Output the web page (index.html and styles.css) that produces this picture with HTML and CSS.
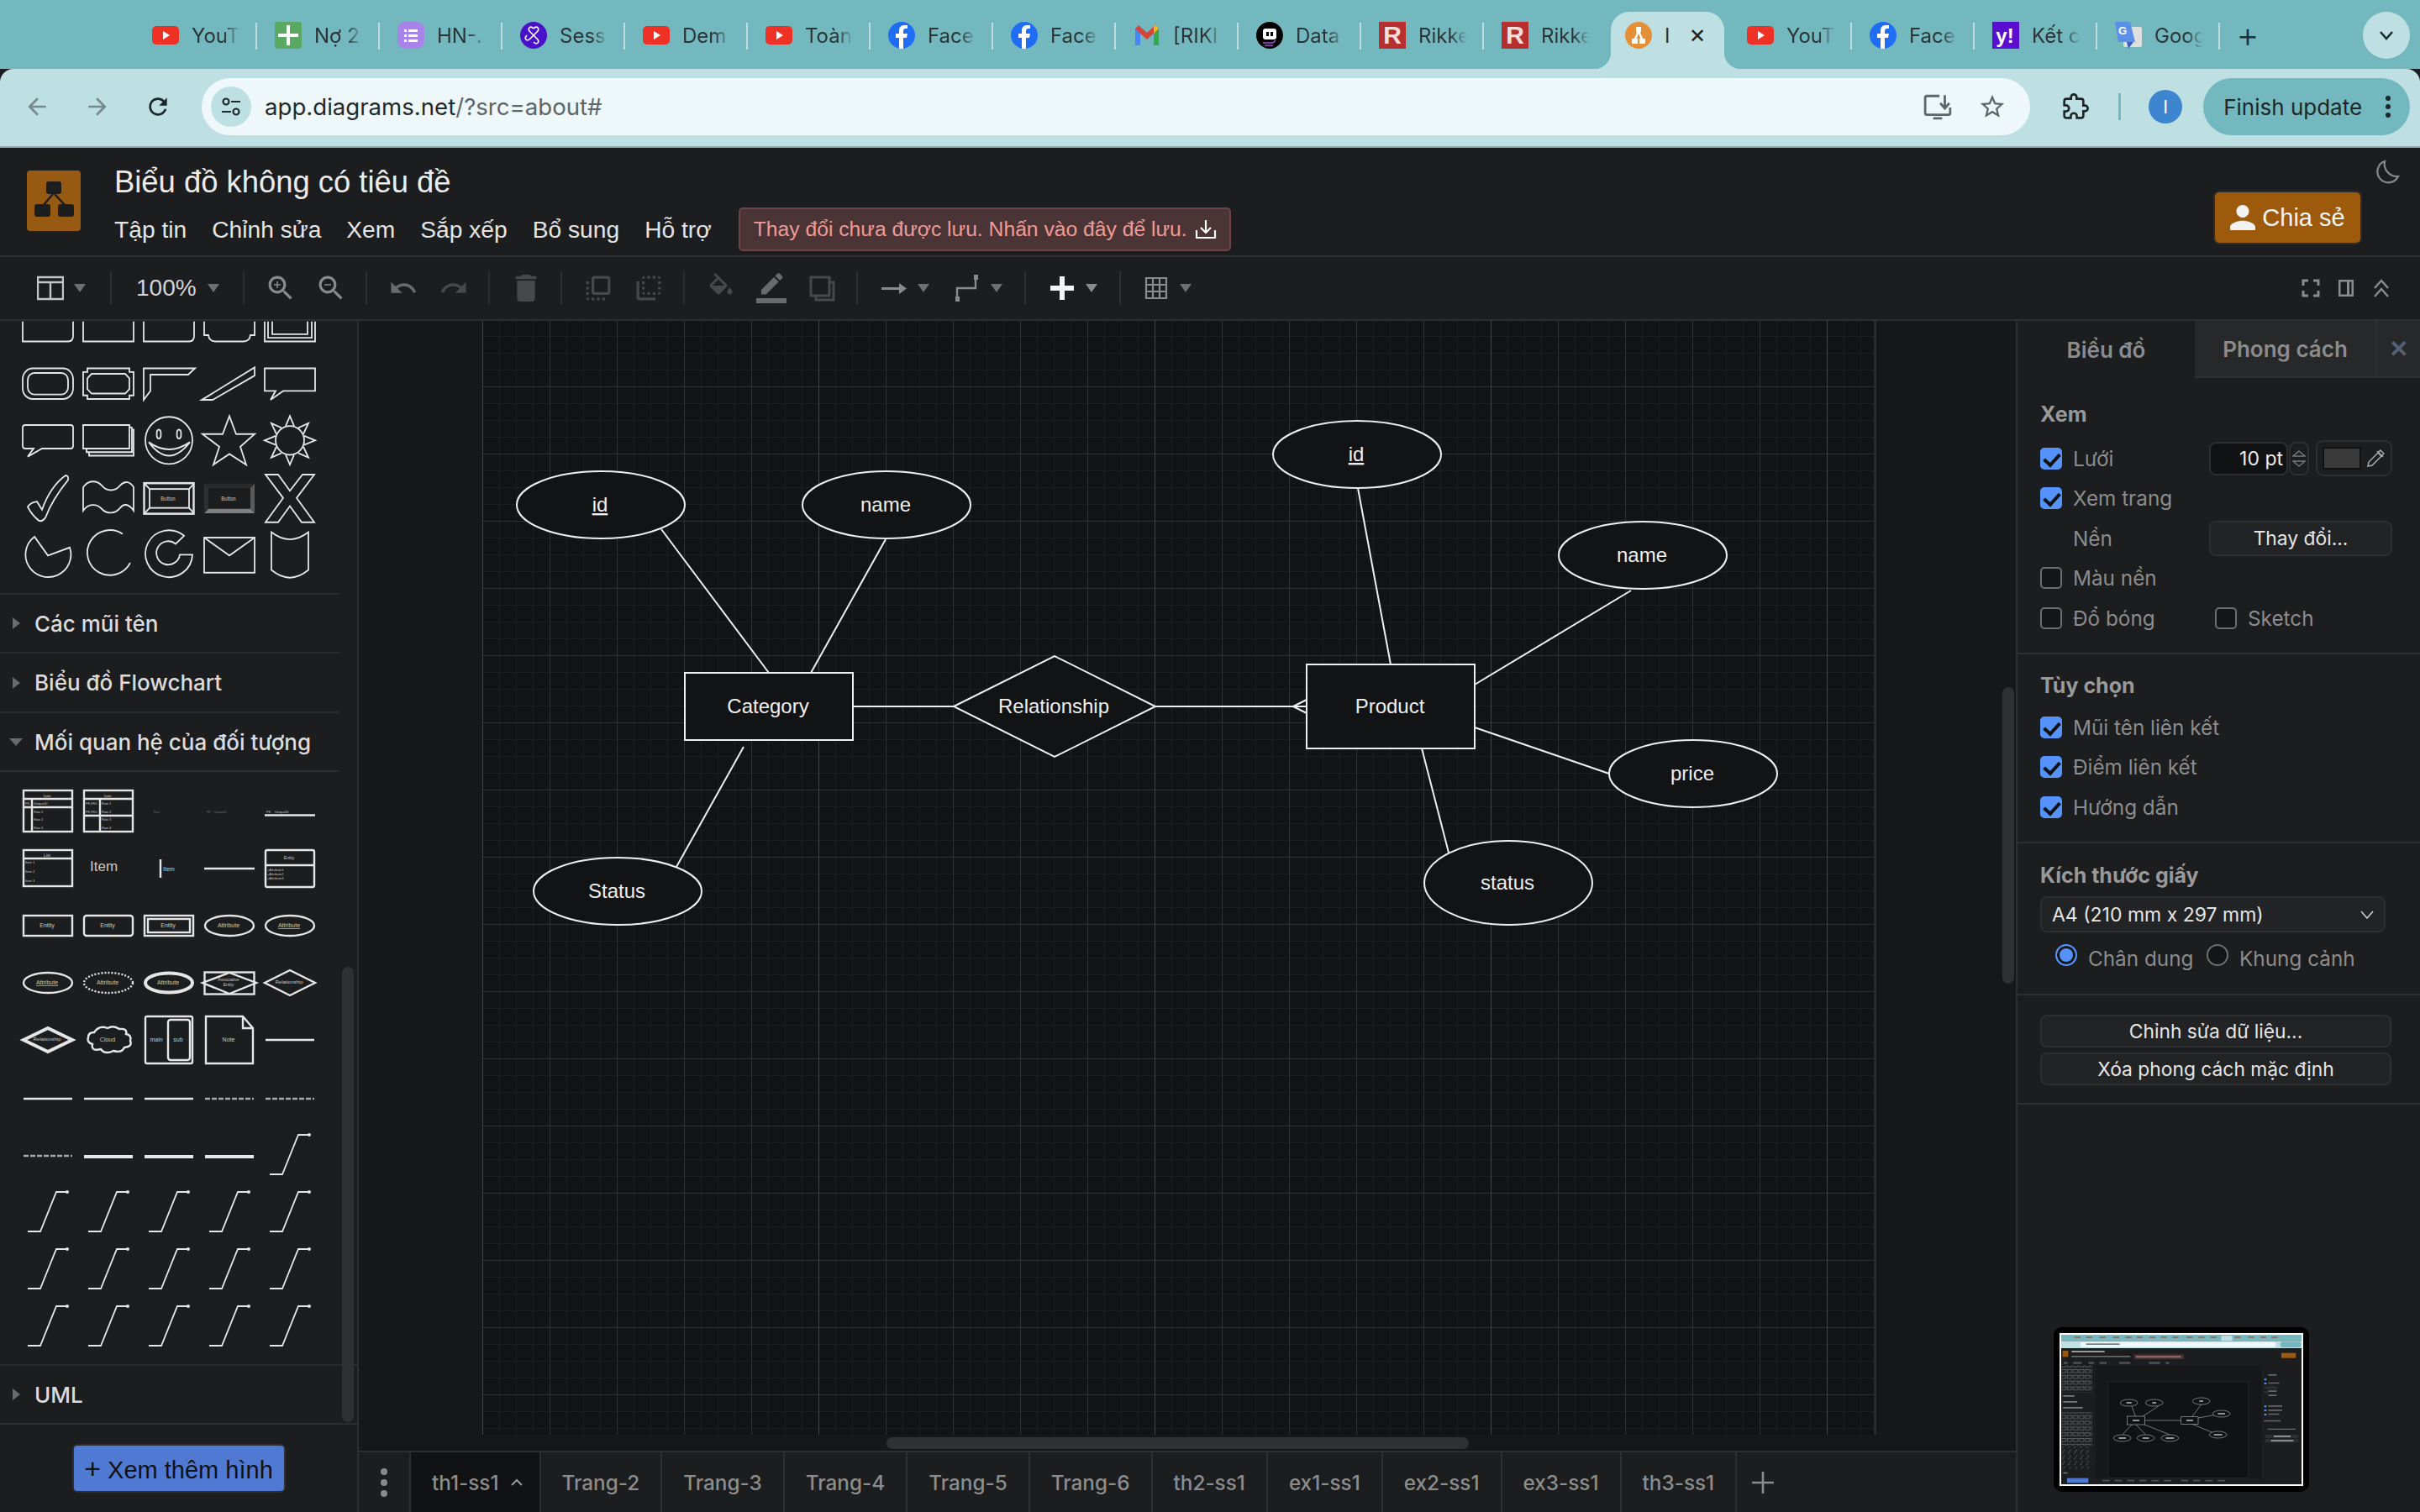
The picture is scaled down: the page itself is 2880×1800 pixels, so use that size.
FILE: index.html
```html
<!DOCTYPE html>
<html lang="vi">
<head>
  <meta charset="UTF-8" />
  <title>Biểu đồ không có tiêu đề - draw.io</title>
  <link rel="stylesheet" href="styles.css">
</head>
<body>
  <!-- shared favicons -->
  <svg class="defs" width="0" height="0">
    <symbol id="fav-yt" viewBox="0 0 32 32"><rect y="5" width="32" height="22" rx="5" fill="#ee3124"/><path d="M13 11l8 5-8 5z" fill="#fff"/></symbol>
    <symbol id="fav-fb" viewBox="0 0 32 32"><circle cx="16" cy="16" r="16" fill="#1f6cf5"/><path d="M18 32V19h4l1-5h-5v-3c0-2 1-3 3-3h2V4h-4c-4 0-6 3-6 6v4H9v5h4v13z" fill="#fff"/></symbol>
    <symbol id="i-caret" viewBox="0 0 16 12"><path d="M1 1h14L8 11z" fill="currentColor"/></symbol>
  </svg>

  <div class="tabstrip">
    <div class="tab"><svg class="fav"><use href="#fav-yt"/></svg><span class="tab-title">YouT</span></div>
    <div class="tab"><svg class="fav" viewBox="0 0 32 32"><rect width="32" height="32" rx="3" fill="#5aa862"/><path d="M14 4h4v10h10v4H18v10h-4V18H4v-4h10z" fill="#fff"/></svg><span class="tab-title">Nợ 2</span></div>
    <div class="tab"><svg class="fav" viewBox="0 0 32 32"><rect width="32" height="32" rx="9" fill="#a884ea"/><path d="M8 9h3v3H8zm5 0h11v3H13zM8 15h3v3H8zm5 0h11v3H13zM8 21h3v3H8zm5 0h11v3H13z" fill="#fff"/></svg><span class="tab-title">HN-.</span></div>
    <div class="tab"><svg class="fav" viewBox="0 0 32 32"><circle cx="16" cy="16" r="16" fill="#4a12c8"/><path d="M16 8c4-4 8 0 4 4l-4 4-4 4c-4 4-8 0-4-4m8 0l4 4c4 4 0 8-4 4M16 16l-4-4c-4-4 0-8 4-4" fill="none" stroke="#fff" stroke-width="1.6"/></svg><span class="tab-title">Sess</span></div>
    <div class="tab"><svg class="fav"><use href="#fav-yt"/></svg><span class="tab-title">Dem</span></div>
    <div class="tab"><svg class="fav"><use href="#fav-yt"/></svg><span class="tab-title">Toàn</span></div>
    <div class="tab"><svg class="fav"><use href="#fav-fb"/></svg><span class="tab-title">Face</span></div>
    <div class="tab"><svg class="fav"><use href="#fav-fb"/></svg><span class="tab-title">Face</span></div>
    <div class="tab"><svg class="fav" viewBox="0 0 32 32"><path d="M2 8v20h6V14l8 7 8-7v14h6V8l-4-4-10 9L6 4z" fill="#d5453a"/><path d="M2 8v20h6V14z" fill="#4486f3"/><path d="M24 14v14h6V8z" fill="#38a852"/><path d="M24 14l6-6-4-4-2 2z" fill="#f5bb17"/></svg><span class="tab-title">[RIKI</span></div>
    <div class="tab"><svg class="fav" viewBox="0 0 32 32"><circle cx="16" cy="16" r="16" fill="#000"/><rect x="8" y="8" width="16" height="13" rx="3" fill="#fff"/><path d="M12 12h3v5h-3zm5 0h3v5h-3z" fill="#000"/><path d="M8 25h12l3-3M10 28h10" stroke="#a24ed6" stroke-width="1.6" fill="none"/></svg><span class="tab-title">Data</span></div>
    <div class="tab"><svg class="fav" viewBox="0 0 32 32"><rect width="32" height="32" fill="#b5302f"/><text x="16" y="26" text-anchor="middle" class="fav-letter">R</text></svg><span class="tab-title">Rikke</span></div>
    <div class="tab tab-before-active"><svg class="fav" viewBox="0 0 32 32"><rect width="32" height="32" fill="#b5302f"/><text x="16" y="26" text-anchor="middle" class="fav-letter">R</text></svg><span class="tab-title">Rikke</span></div>
    <div class="tab tab-active">
      <svg class="fav" viewBox="0 0 32 32"><circle cx="16" cy="16" r="16" fill="#e58f37"/><path d="M13 6h6v6h-1.2l3.400 8H24v6h-7v-6h1.400L16 14l-2.400 6H15v6H8v-6h2.800l3.400-8H13z" fill="#fff"/></svg>
      <span class="tab-title tab-title-short">I</span>
      <span class="tab-close">✕</span>
    </div>
    <div class="tab"><svg class="fav"><use href="#fav-yt"/></svg><span class="tab-title">YouT</span></div>
    <div class="tab"><svg class="fav"><use href="#fav-fb"/></svg><span class="tab-title">Face</span></div>
    <div class="tab"><svg class="fav" viewBox="0 0 32 32"><rect width="32" height="32" fill="#5a0fd0"/><text x="15" y="25" text-anchor="middle" class="fav-y">y!</text></svg><span class="tab-title">Kết c</span></div>
    <div class="tab"><svg class="fav" viewBox="0 0 32 32"><rect x="10" y="6" width="22" height="24" rx="2" fill="#dedede"/><path d="M0 0h18l6 24H4z" fill="#5c8fe8"/><path d="M14 24l8 0-6 8z" fill="#3a62bd"/><text x="9" y="15" text-anchor="middle" class="fav-g">G</text></svg><span class="tab-title">Goog</span></div>
    <span class="tab-plus">+</span>
    <span class="tab-more"><svg width="18" height="12" viewBox="0 0 18 12"><path d="M2 2l7 8 7-8" fill="none" stroke="#1d2a2c" stroke-width="2.600"/></svg></span>
  </div>

  <div class="navbar">
    <svg class="nav-ico nav-back" viewBox="0 0 24 24"><path d="M20 11H7.830l5.590-5.590L12 4l-8 8 8 8 1.410-1.410L7.830 13H20v-2z"/></svg>
    <svg class="nav-ico nav-forward" viewBox="0 0 24 24"><path d="M12 4l-1.410 1.410L16.170 11H4v2h12.170l-5.580 5.590L12 20l8-8z"/></svg>
    <svg class="nav-ico nav-reload" viewBox="0 0 24 24"><path d="M17.650 6.350C16.200 4.900 14.210 4 12 4c-4.420 0-7.990 3.580-7.990 8s3.570 8 7.990 8c3.730 0 6.840-2.550 7.730-6h-2.080c-.82 2.330-3.040 4-5.650 4-3.310 0-6-2.690-6-6s2.690-6 6-6c1.660 0 3.140.69 4.220 1.780L13 11h7V4l-2.350 2.350z"/></svg>
    <div class="omnibox">
      <span class="site-info"><svg width="26" height="26" viewBox="0 0 26 26"><circle cx="7" cy="7" r="3.500" fill="none" stroke="#1f2a2c" stroke-width="2.200"/><path d="M13 7h11M2 19h11" stroke="#1f2a2c" stroke-width="2.200"/><circle cx="19" cy="19" r="3.500" fill="none" stroke="#1f2a2c" stroke-width="2.200"/></svg></span>
      <span class="url">app.diagrams.net<span class="url-rest">/?src=about#</span></span>
      <svg class="omni-ico omni-install" viewBox="0 0 32 32"><path d="M18 4H4a2 2 0 0 0-2 2v17a2 2 0 0 0 2 2h24a2 2 0 0 0 2-2v-6M11 29h10M24 3v14M19 12l5 6 5-6" fill="none" stroke="#5c6668" stroke-width="2.600"/></svg>
      <svg class="omni-ico omni-star" viewBox="0 0 24 24"><path d="M22 9.240l-7.190-.62L12 2 9.190 8.630 2 9.240l5.460 4.730L5.820 21 12 17.270 18.180 21l-1.630-7.030L22 9.240zM12 15.400l-3.760 2.270 1-4.280-3.320-2.880 4.380-.38L12 6.100l1.710 4.040 4.380.38-3.320 2.880 1 4.280L12 15.400z"/></svg>
    </div>
    <svg class="nav-ico nav-ext" viewBox="0 0 24 24"><path d="M20.500 11H19V7c0-1.100-.9-2-2-2h-4V3.500C13 2.120 11.880 1 10.500 1S8 2.120 8 3.500V5H4c-1.100 0-1.990.9-1.990 2v3.800H3.500c1.490 0 2.700 1.210 2.700 2.700s-1.210 2.700-2.700 2.700H2V20c0 1.100.9 2 2 2h3.800v-1.500c0-1.490 1.210-2.700 2.700-2.700 1.490 0 2.700 1.210 2.700 2.700V22H17c1.100 0 2-.9 2-2v-4h1.500c1.380 0 2.500-1.120 2.500-2.500S21.880 11 20.500 11z"/></svg>
    <span class="nav-sep"></span>
    <span class="avatar">I</span>
    <span class="finish">Finish update<svg class="finish-dots" width="8" height="28" viewBox="0 0 8 28"><circle cx="4" cy="4" r="3"/><circle cx="4" cy="14" r="3"/><circle cx="4" cy="24" r="3"/></svg></span>
  </div>

  <div class="app">
    <header class="app-header">
      <svg class="logo" viewBox="0 0 64 72"><rect width="64" height="72" rx="4" fill="#975a12"/><path d="M31 28L19 42M33 28l13 14" stroke="#1c1d1f" stroke-width="2.500"/><rect x="23" y="13" width="18" height="15" rx="3" fill="#1c1d1f"/><rect x="9" y="40" width="19" height="15" rx="3" fill="#1c1d1f"/><rect x="37" y="40" width="19" height="15" rx="3" fill="#1c1d1f"/></svg>
      <div class="head-main">
        <div class="doc-title">Biểu đồ không có tiêu đề</div>
        <div class="menubar">
          <a href="#">Tập tin</a>
          <a href="#">Chỉnh sửa</a>
          <a href="#">Xem</a>
          <a href="#">Sắp xếp</a>
          <a href="#">Bổ sung</a>
          <a href="#">Hỗ trợ</a>
          <div class="unsaved">Thay đổi chưa được lưu. Nhấn vào đây để lưu.
            <svg width="26" height="26" viewBox="0 0 26 26"><path d="M13 2v15M7 11l6 6 6-6M2 14v9h22v-9" fill="none" stroke="#fff" stroke-width="2.200"/></svg>
          </div>
        </div>
      </div>
      <button class="share"><svg width="30" height="30" viewBox="4 4 16 16"><path d="M12 12c2.210 0 4-1.790 4-4s-1.790-4-4-4-4 1.790-4 4 1.790 4 4 4zm0 2c-2.670 0-8 1.340-8 4v2h16v-2c0-2.660-5.330-4-8-4z"/></svg>Chia sẻ</button>
      <svg class="moon" viewBox="0 0 30 30"><path d="M12 2a13 13 0 1 0 16 18A15 15 0 0 1 12 2z" fill="none" stroke="#8a8a8a" stroke-width="2.200"/></svg>
    </header>

    <div class="toolbar">
      <div class="tb-group tb-first">
        <svg class="tb-ico tb-on" viewBox="0 0 32 32"><path d="M1 3h30v26H1zM1 9h30M16 9v20" fill="none" stroke="currentColor" stroke-width="2.400"/></svg>
        <svg class="tb-caret"><use href="#i-caret"/></svg>
      </div>
      <div class="tb-group tb-zoom-group">
        <span class="tb-zoom">100%</span>
        <svg class="tb-caret"><use href="#i-caret"/></svg>
      </div>
      <div class="tb-group">
        <svg class="tb-ico tb-mid" viewBox="2 2 20 20"><path d="M15.500 14h-.79l-.28-.27C15.410 12.590 16 11.110 16 9.500 16 5.910 13.090 3 9.500 3S3 5.910 3 9.500 5.910 16 9.500 16c1.610 0 3.090-.59 4.230-1.570l.27.28v.79l5 4.990L20.490 19l-4.990-5zm-6 0C7.010 14 5 11.990 5 9.500S7.010 5 9.500 5 14 7.010 14 9.500 11.990 14 9.500 14zM12 10h-2v2H9v-2H7V9h2V7h1v2h2v1z"/></svg>
        <svg class="tb-ico tb-mid" viewBox="2 2 20 20"><path d="M15.500 14h-.79l-.28-.27C15.410 12.590 16 11.110 16 9.500 16 5.910 13.090 3 9.500 3S3 5.910 3 9.500 5.910 16 9.500 16c1.610 0 3.090-.59 4.230-1.570l.27.28v.79l5 4.990L20.490 19l-4.990-5zm-6 0C7.010 14 5 11.990 5 9.500S7.010 5 9.500 5 14 7.010 14 9.500 11.990 14 9.500 14zM7 9h5v1H7z"/></svg>
      </div>
      <div class="tb-group">
        <svg class="tb-ico tb-dim" viewBox="1 6 22 12"><path d="M12.500 8c-2.650 0-5.050.99-6.900 2.600L2 7v9h9l-3.620-3.620c1.390-1.160 3.160-1.880 5.120-1.880 3.540 0 6.550 2.310 7.600 5.500l2.370-.78C21.080 11.030 17.150 8 12.500 8z"/></svg>
        <svg class="tb-ico tb-off" viewBox="1 6 22 12"><path d="M18.400 10.600C16.550 8.990 14.150 8 11.500 8c-4.650 0-8.580 3.030-9.960 7.220L3.900 16c1.050-3.190 4.050-5.500 7.600-5.500 1.950 0 3.730.72 5.120 1.880L13 16h9V7l-3.600 3.600z"/></svg>
      </div>
      <div class="tb-group">
        <svg class="tb-ico tb-off" viewBox="3 2 18 20"><path d="M6 19c0 1.100.9 2 2 2h8c1.100 0 2-.9 2-2V7H6v12zM19 4h-3.500l-1-1h-5l-1 1H5v2h14V4z"/></svg>
      </div>
      <div class="tb-group">
        <svg class="tb-ico tb-off" viewBox="2 2 20 20"><path d="M3 13h2v-2H3v2zm0 4h2v-2H3v2zm2 4v-2H3c0 1.100.89 2 2 2zM3 9h2V7H3v2zm12 12h2v-2h-2v2zm4-18H9c-1.110 0-2 .9-2 2v10c0 1.100.89 2 2 2h10c1.100 0 2-.9 2-2V5c0-1.100-.9-2-2-2zm0 12H9V5h10v10zm-8 6h2v-2h-2v2zm-4 0h2v-2H7v2z"/></svg>
        <svg class="tb-ico tb-off" viewBox="2 2 20 20"><path d="M9 7H7v2h2V7zm0 4H7v2h2v-2zm0-8c-1.110 0-2 .9-2 2h2V3zm4 12h-2v2h2v-2zm6-12v2h2c0-1.100-.9-2-2-2zm-6 0h-2v2h2V3zM9 17v-2H7c0 1.100.89 2 2 2zm10-4h2v-2h-2v2zm0-4h2V7h-2v2zm0 8c1.100 0 2-.9 2-2h-2v2zM5 7H3v12c0 1.100.89 2 2 2h12v-2H5V7zm10-2h2V3h-2v2zm0 12h2v-2h-2v2z"/></svg>
      </div>
      <div class="tb-group">
        <svg class="tb-ico tb-off" viewBox="2 0 20 24"><path d="M16.560 8.940L7.620 0 6.210 1.410l2.380 2.380-5.150 5.150c-.59.59-.59 1.540 0 2.120l5.500 5.500c.29.29.68.44 1.060.44s.77-.15 1.060-.44l5.500-5.500c.59-.58.59-1.530 0-2.120zM5.210 10L10 5.210 14.790 10H5.210zM19 11.500s-2 2.170-2 3.500c0 1.100.9 2 2 2s2-.9 2-2c0-1.330-2-3.500-2-3.500z"/></svg>
        <svg class="tb-ico tb-ico-wide tb-dim" viewBox="0 0 24 24"><path d="M17.750 7L14 3.250l-10 10V17h3.750l10-10zm2.960-2.960c.39-.39.39-1.020 0-1.410L18.370.29c-.39-.39-1.020-.39-1.410 0L15 2.250 18.750 6l1.960-1.960zM0 20h24v4H0z"/></svg>
        <svg class="tb-ico tb-off" viewBox="0 0 32 32"><path d="M3 3h22v22H3zM25 9h5v21H9v-5" fill="none" stroke="currentColor" stroke-width="3"/></svg>
      </div>
      <div class="tb-group">
        <svg class="tb-ico tb-mid" viewBox="0 0 32 32"><path d="M1 15h24v3H1zM22 10l9 6.500-9 6.500z"/></svg>
        <svg class="tb-caret"><use href="#i-caret"/></svg>
        <svg class="tb-ico tb-mid" viewBox="0 0 32 32"><path d="M4 31V16h22V3" fill="none" stroke="currentColor" stroke-width="2.400"/><rect x="2" y="26" width="5" height="6"/><rect x="24" y="0" width="5" height="6"/></svg>
        <svg class="tb-caret"><use href="#i-caret"/></svg>
      </div>
      <div class="tb-group">
        <svg class="tb-ico tb-plus" viewBox="0 0 32 32"><path d="M13 2h6v11h11v6H19v11h-6V19H2v-6h11z"/></svg>
        <svg class="tb-caret tb-caret-light"><use href="#i-caret"/></svg>
      </div>
      <div class="tb-group tb-last">
        <svg class="tb-ico tb-mid" viewBox="0 0 32 32"><path d="M4 4h24v24H4zM4 12h24M4 20h24M12 4v24M20 4v24" fill="none" stroke="currentColor" stroke-width="2.200"/></svg>
        <svg class="tb-caret"><use href="#i-caret"/></svg>
      </div>
      <div class="tb-right">
        <svg class="tb-mini" viewBox="4 4 16 16"><path d="M7 14H5v5h5v-2H7v-3zm-2-4h2V7h3V5H5v5zm12 7h-3v2h5v-5h-2v3zM14 5v2h3v3h2V5h-5z"/></svg>
        <svg class="tb-mini" viewBox="0 0 24 24"><path d="M3 2h18v20H3zm2.500 2.500v15H13v-15zM16 4.500v15h2.500v-15z" fill-rule="evenodd"/></svg>
        <svg class="tb-mini" viewBox="0 0 24 24"><path d="M4 12l8-9 8 9M4 22l8-9 8 9" fill="none" stroke="currentColor" stroke-width="2.400"/></svg>
      </div>
    </div>

    <div class="work">
      <aside class="sidebar">
        <div class="side-scroll">
          <svg class="shapes shapes-general" viewBox="0 382 425 324">
            <g transform="translate(0 370) scale(1 1.0714) translate(0 -370)">
              <path d="M27 382V404H81Q87 404 87 398V382"/>
              <path d="M99 382V404H159V382"/>
              <path d="M171 382V404H225Q231 404 231 398V382"/>
              <path d="M243 382V397H248Q249 404 256 404H290Q297 404 298 397H303V382"/>
              <path d="M315 382V404H375V382M319 382V400H371V382M324 382V396H366V382"/>

              <rect x="27" y="434" width="60" height="34" rx="12"/><rect x="33" y="439" width="48" height="24" rx="8"/>
              <path d="M104 434H154V438H159V464H154V468H104V464H99V438H104Z"/><path d="M109 440H149L154 445V457L149 462H109L104 457V445Z"/>
              <path d="M171 434H232L224 441H179V459L171 469Z"/>
              <path d="M240 469L303 433V442L253 469Z"/>
              <path d="M315 434H375V459H337L322 469L328 459H315Z"/>

              <path d="M30 497H84Q87 497 87 500V520Q87 523 84 523H50L33 532L40 523H30Q27 523 27 520V500Q27 497 30 497Z"/>
              <path d="M99 497H154V523H99ZM154 499L157 500V527H103V523M157 502H159V531H106V527"/>
              <ellipse cx="201" cy="514" rx="28" ry="26.200"/><ellipse cx="189" cy="507" rx="2.500" ry="5"/><ellipse cx="213" cy="507" rx="2.500" ry="5"/><path d="M177 516Q201 546 226 516Q201 532 177 516Z"/>
              <path d="M273 487L281 507L303 507L286 521L293 541L273 529L254 541L261 521L241 507L265 507Z"/>
              <ellipse cx="345" cy="514" rx="17" ry="16"/><path d="M340 498L345 487L350 498M355 500L367 495L361 507M362 509L375 514L362 519M361 521L367 533L355 528M350 530L345 541L340 530M335 528L323 533L329 521M328 519L315 514L328 509M329 507L323 495L335 500"/>

              <path d="M33 588Q36 583 44 582L50 591Q60 565 78 553Q82 553 81 558Q62 580 54 600Q50 605 46 603Q38 597 33 588Z"/>
              <path d="M99 566C105 558 115 558 121 564C127 571 137 571 143 564C149 558 155 560 159 566V592C153 584 147 584 143 589C137 596 127 596 121 590C115 584 105 584 99 592Z"/>
              <rect class="thick" x="171.500" y="561.500" width="59" height="34"/><rect x="178" y="568" width="47" height="21"/><path d="M172 562L178 568M231 562L225 568M172 595L178 589M231 595L225 589"/>
              <text class="shape-text" x="200" y="581" font-size="6" text-anchor="middle">Button</text>
              <path class="bevel" d="M243 562H303L298 567H248Z" fill="#2a2a2a"/><path class="bevel" d="M303 562V595L298 590V567Z" fill="#5a5a5a"/><path class="bevel" d="M243 595H303L298 590H248Z" fill="#808080"/><path class="bevel" d="M243 562V595L248 590V567Z" fill="#2f2f2f"/>
              <text class="shape-text" x="272" y="581" font-size="6" text-anchor="middle">Button</text>
              <path d="M316 552H331L345 570L360 552H374L353 578L374 605H359L345 587L331 605H316L337 578Z"/>

              <path d="M41 621L57 642L83 633A27 25 0 1 1 41 621Z"/>
              <path d="M146 618A27 25 0 1 0 155 650"/>
              <path d="M219 620A28 26 0 1 0 229 641H214A14 13 0 1 1 209 629Z"/>
              <rect x="243" y="622" width="60" height="39"/><path d="M243 622L273 642L303 622"/>
              <path d="M323 616Q345 632 367 616V658Q345 675 323 658Z"/>
            </g>
          </svg>

          <div class="side-head"><span class="tri"></span>Các mũi tên</div>
          <div class="side-head side-head-tall"><span class="tri"></span>Biểu đồ Flowchart</div>
          <div class="side-head"><span class="tri tri-open"></span>Mối quan hệ của đối tượng</div>

          <svg class="shapes shapes-er" viewBox="0 917 425 707">
            <defs>
              <g id="step"><path d="M0 48H15L34 1H48"/><circle cx="47" cy="1" r="2" class="dot"/></g>
            </defs>
            <path class="rule" d="M0 918H404"/>
            <g class="thick">
              <rect x="28" y="941" width="58" height="49"/><path d="M28 951H86M28 961H86M38 951V990"/>
              <rect x="100" y="941" width="58" height="49"/><path d="M100 951H158M100 971H158M119 951V990"/>
              <path d="M315 970.500H375"/>
              <rect x="28" y="1012" width="58" height="43"/><path d="M28 1022H86"/>
              <path d="M191 1023V1045M243 1034H303"/>
              <rect x="316" y="1012" width="58" height="44" rx="2"/><path d="M316 1030H374"/>
              <rect x="28" y="1090" width="58" height="24"/>
              <rect x="100" y="1090" width="58" height="24" rx="3"/>
              <rect x="172" y="1090" width="58" height="24"/><rect x="176" y="1094" width="50" height="16"/>
              <ellipse cx="273" cy="1102" rx="29" ry="12"/>
              <ellipse cx="345" cy="1102" rx="29" ry="12"/>
              <ellipse cx="57" cy="1170" rx="29" ry="12"/>
              <ellipse cx="129" cy="1170" rx="29" ry="12" stroke-dasharray="2 2"/>
              <rect x="243.500" y="1157.500" width="59" height="26"/>
              <path d="M241 1170L273 1158L305 1170L273 1183Z"/>
              <path d="M315 1170L345 1155L375 1170L345 1185Z"/>
              <rect x="173" y="1210" width="56" height="56" rx="2"/><rect x="200" y="1214" width="26" height="48" rx="3"/>
              <path d="M245 1210H289L301 1224V1266H245ZM289 1210V1224H301"/>
              <path d="M112 1229Q105 1229 105 1235Q103 1241 110 1243Q108 1252 120 1249Q125 1256 135 1251Q145 1254 148 1247Q158 1246 155 1239Q157 1232 150 1231Q152 1224 142 1225Q135 1220 128 1224Q118 1220 112 1229Z"/>
              <path d="M316 1238H374M28 1308H86M100 1308H158M172 1308H230"/>
              <path d="M244 1308H302M316 1308H374M28 1376H86" stroke-dasharray="6 2" stroke-opacity=".7"/>
            </g>
            <g class="heavy">
              <ellipse cx="201" cy="1170" rx="28" ry="11.500"/>
              <path d="M28 1238L57 1224L86 1238L57 1252Z"/>
              <path d="M100 1377H158M172 1377H230M244 1377H302"/>
            </g>
            <g class="shape-text">
              <text x="56" y="949" font-size="4" text-anchor="middle">Table</text>
              <text x="30" y="958" font-size="4">PK</text><text x="40" y="958" font-size="4">UniqueID</text>
              <text x="40" y="968" font-size="4">Row 1</text><text x="40" y="977" font-size="4">Row 2</text><text x="40" y="987" font-size="4">Row 3</text>
              <text x="128" y="949" font-size="4" text-anchor="middle">Table</text>
              <text x="102" y="958" font-size="4">PK,FK1</text><text x="121" y="958" font-size="4">Row 1</text>
              <text x="102" y="968" font-size="4">PK,FK2</text><text x="121" y="968" font-size="4">Row 2</text>
              <text x="121" y="977" font-size="4">Row 3</text><text x="121" y="987" font-size="4">Row 4</text>
              <text x="183" y="968" font-size="3.500" class="faint">Row</text>
              <text x="246" y="968" font-size="3.500" class="faint">PK</text><text x="255" y="968" font-size="3.500" class="faint">UniqueID</text>
              <text x="317" y="968" font-size="4">PK</text><text x="327" y="968" font-size="4">UniqueID</text>
              <text x="56" y="1020" font-size="5" text-anchor="middle">List</text>
              <text x="30" y="1028" font-size="4">Item 1</text><text x="30" y="1039" font-size="4">Item 2</text><text x="30" y="1050" font-size="4">Item 3</text>
              <text x="107" y="1037" font-size="17">Item</text>
              <text x="194" y="1037" font-size="7">Item</text>
              <text x="344" y="1023" font-size="5" text-anchor="middle">Entity</text>
              <text x="318" y="1037" font-size="4">+Attribute1</text><text x="318" y="1042" font-size="4">+Attribute2</text><text x="318" y="1047" font-size="4">+Attribute3</text>
              <text x="56" y="1104" font-size="7" text-anchor="middle">Entity</text>
              <text x="128" y="1104" font-size="7" text-anchor="middle">Entity</text>
              <text x="200" y="1104" font-size="7" text-anchor="middle">Entity</text>
              <text x="272" y="1104" font-size="7" text-anchor="middle">Attribute</text>
              <text x="344" y="1104" font-size="7" text-anchor="middle" text-decoration="underline">Attribute</text>
              <text x="56" y="1172" font-size="7" text-anchor="middle" text-decoration="underline">Attribute</text>
              <text x="128" y="1172" font-size="7" text-anchor="middle">Attribute</text>
              <text x="200" y="1172" font-size="7" text-anchor="middle">Attribute</text>
              <text x="272" y="1168" font-size="5" text-anchor="middle">Associative</text><text x="272" y="1174" font-size="5" text-anchor="middle">Entity</text>
              <text x="344" y="1171" font-size="6" text-anchor="middle">Relationship</text>
              <text x="56" y="1239" font-size="6" text-anchor="middle">Relationship</text>
              <text x="128" y="1240" font-size="7" text-anchor="middle">Cloud</text>
              <text x="186" y="1240" font-size="7" text-anchor="middle">main</text><text x="212" y="1240" font-size="7" text-anchor="middle">sub</text>
              <text x="272" y="1240" font-size="7" text-anchor="middle">Note</text>
            </g>
            <use href="#step" x="321" y="1350"/>
            <use href="#step" x="33" y="1418"/><use href="#step" x="105" y="1418"/><use href="#step" x="177" y="1418"/><use href="#step" x="249" y="1418"/><use href="#step" x="321" y="1418"/>
            <use href="#step" x="33" y="1486"/><use href="#step" x="105" y="1486"/><use href="#step" x="177" y="1486"/><use href="#step" x="249" y="1486"/><use href="#step" x="321" y="1486"/>
            <use href="#step" x="33" y="1554"/><use href="#step" x="105" y="1554"/><use href="#step" x="177" y="1554"/><use href="#step" x="249" y="1554"/><use href="#step" x="321" y="1554"/>
          </svg>

          <div class="side-head side-head-uml"><span class="tri"></span>UML</div>
          <div class="side-thumb"></div>
        </div>
        <div class="side-foot"><button class="more-shapes"><span class="more-plus">+</span> Xem thêm hình</button></div>
      </aside>

      <main class="center">
        <div class="canvas">
          <div class="page"></div>
          <svg class="diagram" viewBox="427 382 1972 1345">
            <g class="links">
              <path d="M787 630L915 801M1054 642L965 801M885 889L805 1032"/>
              <path d="M1015 841H1136M1375 841H1555M1539 841L1555 833M1539 841L1555 849"/>
              <path d="M1616 581L1655 791M1941 703L1755 815M1755 866L1915 921M1691 887L1724 1015"/>
            </g>
            <g class="nodes">
              <ellipse cx="715" cy="601" rx="100" ry="40"/>
              <ellipse cx="1055" cy="601" rx="100" ry="40"/>
              <rect x="815" y="801" width="200" height="80"/>
              <ellipse cx="735" cy="1061" rx="100" ry="40"/>
              <path d="M1135 841L1255 781L1375 841L1255 901Z"/>
              <rect x="1555" y="791" width="200" height="100"/>
              <ellipse cx="1615" cy="541" rx="100" ry="40"/>
              <ellipse cx="1955" cy="661" rx="100" ry="40"/>
              <ellipse cx="2015" cy="921" rx="100" ry="40"/>
              <ellipse cx="1795" cy="1051" rx="100" ry="50"/>
            </g>
            <g class="labels">
              <text x="714" y="609" text-decoration="underline">id</text>
              <text x="1054" y="609">name</text>
              <text x="914" y="849">Category</text>
              <text x="734" y="1069">Status</text>
              <text x="1254" y="849">Relationship</text>
              <text x="1654" y="849">Product</text>
              <text x="1614" y="549" text-decoration="underline">id</text>
              <text x="1954" y="669">name</text>
              <text x="2014" y="929">price</text>
              <text x="1794" y="1059">status</text>
            </g>
          </svg>
          <div class="scroll-v"></div>
          <div class="scroll-h"></div>
        </div>
        <div class="pagebar">
          <span class="page-menu"><i></i><i></i><i></i></span>
          <div class="page-tab page-tab-active">th1-ss1 <svg width="14" height="10" viewBox="0 0 14 10"><path d="M1 8l6-6 6 6" fill="none" stroke="#999" stroke-width="2"/></svg></div>
          <div class="page-tab">Trang-2</div>
          <div class="page-tab">Trang-3</div>
          <div class="page-tab">Trang-4</div>
          <div class="page-tab">Trang-5</div>
          <div class="page-tab">Trang-6</div>
          <div class="page-tab">th2-ss1</div>
          <div class="page-tab">ex1-ss1</div>
          <div class="page-tab">ex2-ss1</div>
          <div class="page-tab">ex3-ss1</div>
          <div class="page-tab">th3-ss1</div>
          <svg class="page-add" width="28" height="28" viewBox="0 0 28 28"><path d="M14 1v26M1 14h26" stroke="#8a8a8a" stroke-width="2.600"/></svg>
        </div>
      </main>

      <aside class="panel">
        <div class="panel-tabs">
          <div class="panel-tab panel-tab-on">Biểu đồ</div>
          <div class="panel-tab">Phong cách</div>
          <div class="panel-tab panel-x">✕</div>
        </div>

        <section class="psec sec-view">
          <h3>Xem</h3>
          <div class="row"><input class="check" type="checkbox" checked><label>Lưới</label>
            <div class="row-right">
              <span class="num">10 pt</span>
              <span class="spin"><svg width="16" height="8" viewBox="0 0 16 8"><path d="M8 1l7 6H1z" fill="none" stroke="#777" stroke-width="1.500"/></svg><svg width="16" height="8" viewBox="0 0 16 8"><path d="M8 7L1 1h14z" fill="none" stroke="#777" stroke-width="1.500"/></svg></span>
              <span class="color-box"><span class="swatch"></span><svg width="22" height="22" viewBox="0 0 22 22"><path d="M2 20l1-5L14 4l4 4L7 19zM13 2l7 7M17 1l4 4-3 3-4-4z" fill="none" stroke="#aaa" stroke-width="1.500"/></svg></span>
            </div>
          </div>
          <div class="row"><input class="check" type="checkbox" checked><label>Xem trang</label></div>
          <div class="row row-indent"><label>Nền</label><div class="row-right"><button class="pbtn pbtn-bg">Thay đổi...</button></div></div>
          <div class="row"><input class="check" type="checkbox"><label>Màu nền</label></div>
          <div class="row"><input class="check" type="checkbox"><label>Đổ bóng</label>
            <div class="row-right row-sketch"><input class="check" type="checkbox"><label>Sketch</label></div>
          </div>
        </section>

        <section class="psec sec-options">
          <h3>Tùy chọn</h3>
          <div class="row"><input class="check" type="checkbox" checked><label>Mũi tên liên kết</label></div>
          <div class="row"><input class="check" type="checkbox" checked><label>Điểm liên kết</label></div>
          <div class="row"><input class="check" type="checkbox" checked><label>Hướng dẫn</label></div>
        </section>

        <section class="psec sec-paper">
          <h3>Kích thước giấy</h3>
          <div class="paper-select">A4 (210 mm x 297 mm)<svg width="16" height="10" viewBox="0 0 16 10"><path d="M1 1l7 8 7-8" fill="none" stroke="#ccc" stroke-width="1.600"/></svg></div>
          <div class="radios">
            <div class="radio-item"><input class="radio" type="radio" name="orient" checked><label>Chân dung</label></div>
            <div class="radio-item"><input class="radio" type="radio" name="orient"><label>Khung cảnh</label></div>
          </div>
        </section>

        <section class="psec sec-actions">
          <button class="pbtn">Chỉnh sửa dữ liệu...</button>
          <button class="pbtn">Xóa phong cách mặc định</button>
        </section>
      </aside>
    </div>

    <div class="minimap">
      <svg class="minimap-shot" viewBox="0 0 864 540">
        <defs>
          <pattern id="mini-cell" width="21.600" height="20.500" patternUnits="userSpaceOnUse"><rect x="3" y="4" width="16" height="11" fill="none" stroke="#8e8e8e" stroke-width="1.600"/></pattern>
          <pattern id="mini-step" width="21.600" height="20.500" patternUnits="userSpaceOnUse"><path d="M5 17h3l6-13h3" fill="none" stroke="#8e8e8e" stroke-width="1.400"/></pattern>
        </defs>
        <rect width="864" height="540" fill="#17181a"/>
        <rect width="864" height="25" fill="#74b8bf"/>
        <rect y="25" width="864" height="26" fill="#bfe0e3"/>
        <rect x="70" y="29" width="700" height="18" rx="9" fill="#eef7f9"/>
        <rect x="785" y="28" width="75" height="20" rx="10" fill="#74b8bf"/>
        <path d="M50 9h22v6H50zM92 9h22v6H92zM140 9h22v6h-22zM188 9h22v6h-22zM232 9h22v6h-22zM272 9h22v6h-22zM318 9h22v6h-22zM358 9h22v6h-22zM400 9h22v6h-22zM450 9h22v6h-22zM492 9h22v6h-22zM536 9h22v6h-22zM622 9h22v6h-22zM670 9h22v6h-22zM714 9h22v6h-22zM754 9h22v6h-22z" fill="#8c7268"/>
        <rect x="574" y="6" width="40" height="19" rx="5" fill="#bfe0e3"/>
        <rect x="92" y="34" width="120" height="5" fill="#6d7b7d"/>
        <rect y="53" width="864" height="60" fill="#1c1d1f"/>
        <rect x="8" y="60" width="20" height="22" fill="#975a12"/>
        <rect x="40" y="60" width="118" height="6" fill="#9a9a9a"/>
        <rect x="40" y="78" width="210" height="5" fill="#6a6a6a"/>
        <rect x="263" y="73" width="177" height="17" fill="#4a3435"/>
        <rect x="270" y="79" width="160" height="5" fill="#a86f6d"/>
        <rect x="789" y="68" width="52" height="18" fill="#9e5a0c"/>
        <path d="M12 100h14v7H12zM46 100h30v7H46zM100 100h20v7h-20zM140 100h25v7h-25zM210 100h40v7h-40zM316 100h40v7h-40zM376 100h12v7h-12z" fill="#4f5052"/>
        <rect y="113" width="126" height="402" fill="#1c1d1f"/>
        <rect x="718" y="113" width="146" height="427" fill="#1c1d1f"/>
        <rect y="515" width="718" height="25" fill="#1c1d1f"/>
        <rect x="5" y="112" width="108" height="96" fill="url(#mini-cell)"/>
        <path d="M10 219h40v5H10zM10 240h50v5H10zM10 261h70v5H10zM10 494h16v5H10z" fill="#7a7a7a"/>
        <rect x="5" y="279" width="108" height="120" fill="url(#mini-cell)"/>
        <rect x="5" y="400" width="108" height="82" fill="url(#mini-step)"/>
        <rect x="24" y="515" width="76" height="17" fill="#5079d3"/>
        <path d="M150 524h260M430 524h170" stroke="#4e4f51" stroke-width="5" stroke-dasharray="26 18"/>
        <path d="M742 144h30v5h-30zM742 173h40v5h-40zM742 188h24v5h-24zM742 202h30v5h-30zM742 217h30v5h-30zM742 255h50v5h-50zM742 270h50v5h-50zM742 284h40v5h-40zM727 308h60v5h-60zM740 338h100v4H740z" fill="#66676a"/>
        <path d="M728 160h8v6h-8zM728 174h8v6h-8zM728 256h8v6h-8zM728 270h8v6h-8zM728 285h8v6h-8z" fill="#5593fb"/>
        <path d="M728 190h8v6h-8zM728 204h8v6h-8zM732 205h8v6h-8z" fill="#333"/>
        <path d="M732 188h44v9h-44zM730 360h120v12H730zM730 376h120v12H730z" fill="#2e2f31"/>
        <path d="M762 363h60v5h-60zM752 379h80v5h-80z" fill="#9a9a9a"/>
        <rect x="171" y="171" width="499" height="344" fill="#111213" stroke="#29292b" stroke-width="2"/>
        <g fill="none" stroke="#a7a8a9" stroke-width="2">
          <path d="M255 258L268 294M350 258L295 294M255 324L221 360M270 324L305 360M300 324L391 360M301 309H431M503 252L470 296M492 300L575 285M470 322L563 360"/>
          <g fill="#111213">
            <rect x="238" y="294" width="63" height="30"/><rect x="431" y="296" width="61" height="26"/>
            <ellipse cx="245" cy="246" rx="31" ry="12"/><ellipse cx="335" cy="246" rx="31" ry="12"/>
            <ellipse cx="221" cy="372" rx="31" ry="12"/><ellipse cx="305" cy="372" rx="31" ry="12"/><ellipse cx="391" cy="372" rx="31" ry="12"/>
            <ellipse cx="503" cy="240" rx="31" ry="12"/><ellipse cx="575" cy="285" rx="31" ry="12"/><ellipse cx="563" cy="360" rx="31" ry="12"/>
          </g>
        </g>
        <path d="M236 244h18v4h-18zM328 244h14v4h-14zM258 307h24v4h-24zM450 307h24v4h-24zM208 370h26v4h-26zM294 370h22v4h-22zM376 370h30v4h-30zM496 238h14v4h-14zM562 283h26v4h-26zM548 358h30v4h-30z" fill="#bcbcbc"/>
      </svg>
    </div>
  </div>
</body>
</html>
```
FILE: styles.css
```css
* {
  box-sizing: border-box;
}
html, body {
  margin: 0;
  height: 100%;
}
body {
  width: 2880px;
  height: 1800px;
  display: flex;
  flex-direction: column;
  overflow: hidden;
  background: #1c1d1f;
  font-family: Inter, "Noto Sans", sans-serif;
}
.defs {
  position: absolute;
}

/* browser tabs */
.tabstrip {
  height: 82px;
  flex: none;
  display: flex;
  align-items: flex-start;
  padding-left: 160px;
  background: #74b8bf;
}
.tab {
  position: relative;
  width: 146px;
  height: 82px;
  flex: none;
  display: flex;
  align-items: center;
  gap: 15px;
  padding: 2px 0 0 21px;
  color: #2b3436;
  font-size: 24px;
}
.tab::after {
  content: "";
  position: absolute;
  right: 0;
  top: 27px;
  width: 2px;
  height: 32px;
  background: #bfdde0;
}
.tab-before-active::after {
  display: none;
}
.fav {
  width: 32px;
  height: 32px;
  flex: none;
}
.fav-letter {
  font: 700 30px "Liberation Sans", sans-serif;
  fill: #f7dede;
}
.fav-y {
  font: 700 24px "Liberation Sans", sans-serif;
  fill: #fff;
}
.fav-g {
  font: 700 13px "Liberation Sans", sans-serif;
  fill: #fff;
}
.tab-title {
  width: 62px;
  white-space: nowrap;
  -webkit-mask-image: linear-gradient(to right, #000 38px, transparent 58px);
  mask-image: linear-gradient(to right, #000 38px, transparent 58px);
}
.tab-active {
  width: 135px;
  height: 68px;
  margin: 14px 6px 0 5px;
  padding: 0 0 12px 17px;
  background: #bfe0e3;
  border-radius: 22px 22px 0 0;
}
.tab-active::before,
.tab-active::after {
  content: "";
  position: absolute;
  top: auto;
  bottom: 0;
  width: 20px;
  height: 20px;
  background: transparent;
}
.tab-active::before {
  left: -20px;
  background: radial-gradient(circle at 0 0, transparent 20px, #bfe0e3 20.5px);
}
.tab-active::after {
  right: -20px;
  background: radial-gradient(circle at 100% 0, transparent 20px, #bfe0e3 20.5px);
}
.tab-title-short {
  width: 12px;
  -webkit-mask-image: none;
  mask-image: none;
}
.tab-close {
  margin-left: 2px;
  font-size: 24px;
  color: #1a2224;
}
.tab-plus {
  width: 38px;
  margin-left: 14px;
  font-size: 42px;
  font-weight: 300;
  line-height: 82px;
  text-align: center;
  color: #223032;
}
.tab-more {
  width: 56px;
  height: 56px;
  margin: 14px 12px 0 auto;
  display: flex;
  align-items: center;
  justify-content: center;
  border-radius: 50%;
  background: #bfe0e3;
}

/* browser nav */
.navbar {
  height: 94px;
  flex: none;
  display: flex;
  align-items: center;
  padding: 12px 12px 14px 0;
  background: #bfe0e3;
  border-bottom: 2px solid #8fa8ab;
  border-radius: 16px 16px 0 0;
}
.nav-ico {
  width: 32px;
  height: 32px;
  flex: none;
  fill: #1d2628;
}
.nav-back {
  margin-left: 28px;
  fill: #75898c;
}
.nav-forward {
  margin-left: 40px;
  fill: #75898c;
}
.nav-reload {
  margin-left: 40px;
}
.omnibox {
  width: 2178px;
  height: 68px;
  margin-left: 36px;
  display: flex;
  align-items: center;
  padding-left: 11px;
  background: #eef7f9;
  border-radius: 34px;
}
.site-info {
  width: 48px;
  height: 48px;
  flex: none;
  display: flex;
  align-items: center;
  justify-content: center;
  border-radius: 50%;
  background: #bfe0e3;
}
.url {
  margin-left: 16px;
  font-size: 27.600px;
  color: #1f2a2c;
}
.url-rest {
  color: #5c6668;
}
.omni-ico {
  flex: none;
  width: 34px;
  height: 34px;
  fill: #5c6668;
}
.omni-install {
  margin-left: auto;
}
.omni-star {
  margin: 0 28px 0 31px;
}
.nav-ext {
  margin-left: 38px;
  fill: none;
  stroke: #1d2628;
  stroke-width: 2;
}
.nav-sep {
  width: 3px;
  height: 32px;
  margin-left: 35px;
  background: #74b8bf;
}
.avatar {
  width: 40px;
  height: 40px;
  margin-left: 33px;
  border-radius: 50%;
  background: #3d86cf;
  color: #fff;
  font-size: 22px;
  line-height: 40px;
  text-align: center;
}
.finish {
  width: 246px;
  height: 68px;
  margin-left: 25px;
  display: flex;
  align-items: center;
  justify-content: space-between;
  padding: 0 22px 0 24px;
  border-radius: 34px;
  background: #74b8bf;
  color: #1d2628;
  font-size: 26px;
}
.finish-dots {
  fill: #1d2628;
}

/* drawio header */
.app {
  flex: 1;
  min-height: 0;
  position: relative;
  display: flex;
  flex-direction: column;
  background: #1c1d1f;
}
.app-header {
  height: 130px;
  flex: none;
  display: flex;
  align-items: flex-start;
  border-bottom: 2px solid #2d2e31;
}
.logo {
  width: 64px;
  height: 72px;
  margin: 27px 40px 0 32px;
  flex: none;
}
.head-main {
  flex: 1;
  padding-top: 20px;
}
.doc-title {
  font-family: "Liberation Sans", sans-serif;
  font-size: 36.400px;
  line-height: 42px;
  color: #ececec;
}
.menubar {
  height: 52px;
  margin-top: 9px;
  display: flex;
  align-items: center;
  gap: 30px;
  font-family: "Liberation Sans", sans-serif;
  font-size: 28.200px;
}
.menubar a {
  color: #e4e4e4;
  text-decoration: none;
}
.unsaved {
  height: 52px;
  margin-left: 2px;
  display: flex;
  align-items: center;
  gap: 9px;
  padding: 0 15px 0 16px;
  background: #4a3435;
  border: 2px solid #6e4347;
  border-radius: 5px;
  color: #f09a97;
  font-size: 24.700px;
}
.share {
  width: 177px;
  height: 64px;
  margin-top: 51px;
  flex: none;
  display: flex;
  align-items: center;
  justify-content: center;
  gap: 8px;
  padding: 0;
  background: #9e5a0c;
  border: 2px solid #2b2c2f;
  border-radius: 7px;
  color: #f5f5f5;
  font-family: "Liberation Sans", sans-serif;
  font-size: 29px;
}
.share svg {
  fill: #f2f2f2;
}
.moon {
  width: 30px;
  height: 30px;
  margin: 14px 24px 0 15px;
  flex: none;
}

/* toolbar */
.toolbar {
  height: 76px;
  flex: none;
  display: flex;
  align-items: center;
  border-bottom: 2px solid #2d2e31;
}
.tb-group {
  height: 40px;
  display: flex;
  align-items: center;
  gap: 28px;
  padding: 0 25px 0 27px;
  border-right: 2px solid #2d2e31;
  color: #8a8a8a;
}
.tb-first {
  padding: 0 28px 0 44px;
}
.tb-zoom-group {
  padding: 0 27px 0 29px;
}
.tb-last {
  border-right: 0;
  padding-left: 26px;
}
.tb-ico {
  width: 32px;
  height: 36px;
  flex: none;
  fill: currentColor;
}
.tb-ico-wide {
  width: 40px;
  margin: 0 -4px;
}
.tb-on {
  color: #c6c6c6;
}
.tb-mid {
  color: #8a8a8a;
}
.tb-dim {
  color: #6a6a6a;
}
.tb-off {
  color: #47484a;
}
.tb-plus {
  color: #f4f4f4;
}
.tb-zoom {
  width: 73px;
  color: #d4d4d4;
  font-family: "Liberation Sans", sans-serif;
  font-size: 28px;
}
.tb-caret {
  width: 16px;
  height: 12px;
  flex: none;
  margin-left: -17px;
  color: #6f6f6f;
}
.tb-caret-light {
  color: #8a8a8a;
}
.tb-right {
  margin-left: auto;
  margin-right: 34px;
  display: flex;
  gap: 18px;
}
.tb-mini {
  width: 24px;
  height: 24px;
  fill: #8c8c8c;
  color: #8c8c8c;
}

/* layout */
.work {
  flex: 1;
  min-height: 0;
  display: flex;
}

/* shapes sidebar */
.sidebar {
  width: 427px;
  flex: none;
  display: flex;
  flex-direction: column;
  border-right: 2px solid #2d2e31;
}
.side-scroll {
  position: relative;
  height: 1314px;
  flex: none;
  overflow: hidden;
  border-bottom: 2px solid #2d2e31;
}
.shapes {
  display: block;
  width: 425px;
  fill: none;
  stroke: #e6e6e6;
  stroke-width: 1.800;
}
.shapes-general {
  height: 324px;
}
.shapes-er {
  height: 707px;
}
.rule {
  stroke: #2a2b2e;
  stroke-width: 2;
}
.thick {
  stroke-width: 2.400;
}
.heavy {
  stroke-width: 4;
}
.bevel {
  stroke: none;
}
.dot {
  fill: #e6e6e6;
  stroke: none;
}
.shape-text {
  stroke: none;
  fill: #c8c8c8;
  font-family: "Liberation Sans", sans-serif;
}
.faint {
  fill: #707070;
}
.side-head {
  width: 404px;
  height: 70px;
  display: flex;
  align-items: center;
  padding-left: 15px;
  border-top: 2px solid #2a2b2e;
  color: #dcdcdc;
  font-size: 26px;
  font-weight: 500;
}
.side-head-tall {
  height: 71px;
}
.side-head-uml {
  width: 425px;
}
.tri {
  width: 0;
  height: 0;
  margin-right: 17px;
  border-left: 9px solid #6a6a6a;
  border-top: 7px solid transparent;
  border-bottom: 7px solid transparent;
}
.tri-open {
  margin: 0 14px 0 -4px;
  border-left: 8px solid transparent;
  border-right: 8px solid transparent;
  border-top: 9px solid #6a6a6a;
  border-bottom: 0;
}
.side-thumb {
  position: absolute;
  left: 407px;
  top: 769px;
  width: 14px;
  height: 542px;
  border-radius: 7px;
  background: #2f3032;
}
.side-foot {
  flex: 1;
  display: flex;
  justify-content: center;
  align-items: flex-start;
  padding: 23px 0 0 0;
}
.more-shapes {
  width: 254px;
  height: 58px;
  padding: 0;
  background: #5079d3;
  border: 2px solid #2d2e31;
  border-radius: 6px;
  color: #101214;
  font-family: "Liberation Sans", sans-serif;
  font-size: 29px;
  line-height: 1;
}
.more-plus {
  font-size: 34px;
}

/* canvas */
.center {
  flex: 1;
  min-width: 0;
  display: flex;
  flex-direction: column;
}
.canvas {
  flex: 1;
  min-height: 0;
  position: relative;
  display: flex;
  padding: 0 166px 19px 147px;
  background: #161718;
}
.page {
  flex: 1;
  border-right: 3px solid #2a2b2c;
  background-color: #121314;
  background-image:
    linear-gradient(to right, #444 1px, transparent 1px),
    linear-gradient(to right, #2f3031 1px, transparent 1px),
    linear-gradient(to bottom, #2f3031 1px, transparent 1px),
    linear-gradient(to right, #1d1e1f 1px, transparent 1px),
    linear-gradient(to bottom, #1d1e1f 1px, transparent 1px);
  background-size: 400px 100%, 80px 100%, 100% 80px, 20px 100%, 100% 20px;
  background-position: 0 0, 0 0, 0 78px, 0 0, 0 18px;
}
.diagram {
  position: absolute;
  left: 0;
  top: 0;
  width: 1972px;
  height: 1345px;
}
.links path {
  fill: none;
  stroke: #efefef;
  stroke-width: 2;
}
.nodes * {
  fill: #121314;
  stroke: #efefef;
  stroke-width: 2;
}
.labels text {
  fill: #efefef;
  font-family: "Liberation Sans", sans-serif;
  font-size: 24px;
  text-anchor: middle;
}
.scroll-v {
  position: absolute;
  right: 2px;
  top: 436px;
  width: 14px;
  height: 353px;
  border-radius: 7px;
  background: #2f3032;
}
.scroll-h {
  position: absolute;
  left: 628px;
  top: 1329px;
  width: 693px;
  height: 14px;
  border-radius: 7px;
  background: #2f3032;
}

/* page tabs */
.pagebar {
  height: 73px;
  flex: none;
  display: flex;
  align-items: stretch;
  border-top: 2px solid #2d2e31;
  color: #8c8c8c;
  font-size: 24.300px;
  font-weight: 500;
}
.page-menu {
  width: 60px;
  flex: none;
  display: flex;
  flex-direction: column;
  align-items: center;
  justify-content: center;
  gap: 5px;
}
.page-menu i {
  width: 8px;
  height: 8px;
  border-radius: 50%;
  background: #8a8a8a;
}
.page-tab {
  display: flex;
  align-items: center;
  gap: 14px;
  padding: 0 25px;
  border-left: 2px solid #2d2e31;
  white-space: nowrap;
}
.page-tab:last-of-type {
  border-right: 2px solid #2d2e31;
}
.page-tab-active {
  background: #111213;
  padding-right: 20px;
}
.page-add {
  align-self: center;
  margin-left: 17px;
}

/* right panel */
.panel {
  width: 481px;
  flex: none;
  border-left: 2px solid #2d2e31;
  color: #8c8c8c;
  font-size: 24.300px;
}
.panel-tabs {
  height: 68px;
  display: flex;
  font-weight: 600;
  font-size: 26px;
}
.panel-tab {
  width: 215px;
  display: flex;
  align-items: center;
  justify-content: center;
  background: #27282a;
  border-bottom: 2px solid #2d2e31;
}
.panel-tab-on {
  width: 211px;
  background: none;
  border-bottom: 0;
}
.panel-x {
  flex: 1;
  border-left: 2px solid #2d2e31;
  color: #556074;
  font-size: 28px;
}
.psec {
  padding-left: 27px;
  border-bottom: 2px solid #2d2e31;
}
.psec h3 {
  height: 30px;
  margin: 0;
  color: #999;
  font-size: 25px;
  font-weight: 700;
  line-height: 30px;
}
.sec-view {
  height: 329px;
  padding-top: 28px;
}
.sec-view h3 {
  margin-bottom: 14px;
}
.sec-options {
  height: 225px;
  padding-top: 22px;
}
.sec-options h3 {
  margin-bottom: 11px;
}
.sec-paper {
  height: 181px;
  padding-top: 23px;
}
.sec-paper h3 {
  margin-bottom: 10px;
}
.sec-actions {
  height: 130px;
  padding-top: 23px;
}
.row {
  height: 47.500px;
  display: flex;
  align-items: center;
  gap: 13px;
}
.row-indent {
  padding-left: 39px;
}
.row-right {
  width: 251px;
  margin-left: auto;
  padding-right: 33px;
  display: flex;
  align-items: center;
}
.row-sketch {
  width: 244px;
  gap: 13px;
}
.check,
.radio {
  appearance: none;
  -webkit-appearance: none;
  position: relative;
  width: 26px;
  height: 26px;
  margin: 0;
  flex: none;
  background: #141516;
  border: 2px solid #6e6e6e;
}
.check {
  border-radius: 5px;
}
.check:checked {
  background: #5593fb;
  border-color: #5593fb;
}
.check:checked::after {
  content: "";
  position: absolute;
  left: 6px;
  top: 1px;
  width: 8px;
  height: 15px;
  border: solid #111;
  border-width: 0 4px 4px 0;
  transform: rotate(42deg);
}
.radio {
  border-radius: 50%;
}
.radio:checked {
  background: #5593fb;
  border-color: #5593fb;
  box-shadow: inset 0 0 0 3px #141516;
}
.num {
  width: 94px;
  height: 40px;
  padding-right: 4px;
  background: #111213;
  border: 2px solid #2d2e31;
  border-radius: 8px;
  color: #eee;
  font-size: 23px;
  line-height: 36px;
  text-align: right;
}
.spin {
  width: 24px;
  height: 40px;
  margin-left: 1px;
  display: flex;
  flex-direction: column;
  align-items: center;
  justify-content: center;
  gap: 4px;
  border: 2px solid #2d2e31;
  border-radius: 8px;
}
.color-box {
  width: 91px;
  height: 43px;
  margin-left: 8px;
  display: flex;
  align-items: center;
  gap: 6px;
  padding-left: 6px;
  border: 2px solid #2d2e31;
  border-radius: 9px;
}
.swatch {
  width: 46px;
  height: 27px;
  background: #3a3a3a;
  border: 2px solid #111;
}
.pbtn {
  display: block;
  width: 418px;
  height: 39px;
  margin-bottom: 6px;
  padding: 0;
  background: #222325;
  border: 2px solid #2d2e31;
  border-radius: 8px;
  color: #e6e6e6;
  font-family: Inter, sans-serif;
  font-size: 22.800px;
}
.pbtn-bg {
  width: 218px;
  height: 42px;
  margin: 0;
}
.paper-select {
  width: 411px;
  height: 43px;
  display: flex;
  align-items: center;
  justify-content: space-between;
  padding: 0 12px;
  background: #222325;
  border: 2px solid #2d2e31;
  border-radius: 8px;
  color: #e6e6e6;
  font-size: 23px;
}
.radios {
  margin-top: 14px;
  padding-left: 18px;
  display: flex;
}
.radio-item {
  width: 180px;
  display: flex;
  align-items: flex-start;
  gap: 13px;
  line-height: 34px;
  white-space: nowrap;
}

/* minimap */
.minimap {
  position: absolute;
  left: 2444px;
  top: 1404px;
  width: 304px;
  height: 196px;
  padding: 8px;
  background: #000;
  border-radius: 10px;
}
.minimap-shot {
  display: block;
  width: 288px;
  height: 180px;
  outline: 2px solid #fff;
  outline-offset: -1px;
  filter: blur(.5px);
}
```
